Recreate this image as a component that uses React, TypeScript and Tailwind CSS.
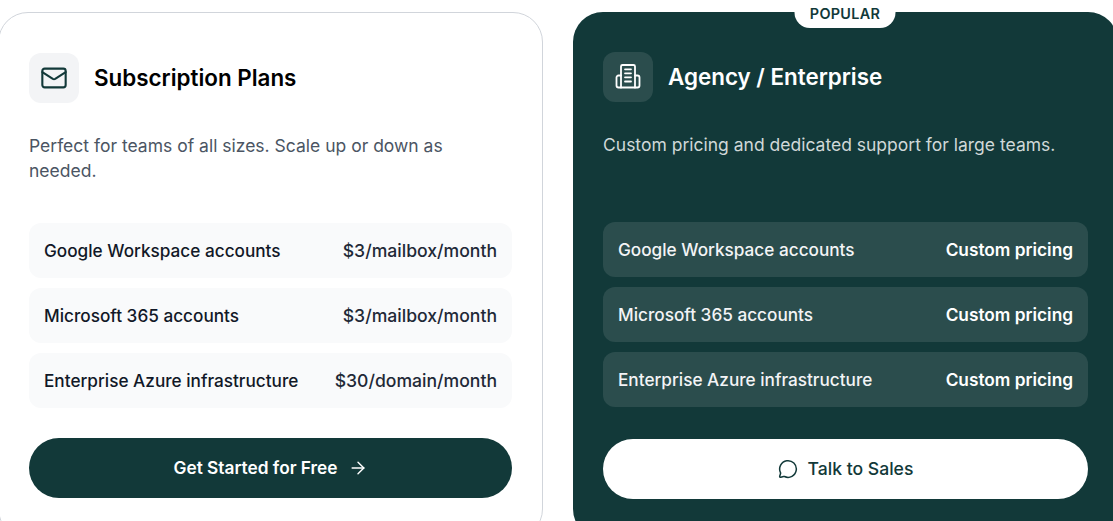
import { ArrowRight, Mail, MessageCircle } from 'lucide-react'

const font = { fontFamily: 'Inter, "Liberation Sans", sans-serif' }

const plans = [
  { name: 'Google Workspace accounts', price: '$3/mailbox/month' },
  { name: 'Microsoft 365 accounts', price: '$3/mailbox/month' },
  { name: 'Enterprise Azure infrastructure', price: '$30/domain/month' },
]

function AgencyIcon() {
  return (
    <svg width="28" height="28" viewBox="0 0 28 28" fill="none" stroke="currentColor" strokeWidth="1.8" strokeLinecap="round" strokeLinejoin="round">
      <path d="M7 24.5V3.5A1.5 1.5 0 0 1 8.5 2h11A1.5 1.5 0 0 1 21 3.5v21" />
      <path d="M7 12.5H4.5a2 2 0 0 0-2 2v8a2 2 0 0 0 2 2h19a2 2 0 0 0 2-2v-8a2 2 0 0 0-2-2H21" />
      <path d="M11 6.3h6M11 10.3h6M11 14.3h6M11 18.5h6" />
    </svg>
  )
}

export default function App() {
  return (
    <div className="h-[521px] w-[1113px] overflow-hidden bg-white" style={font}>
      <div className="ml-[-2px] grid w-[1120px] grid-cols-2 gap-[30px] pt-3">
        <div className="rounded-[30px] border border-[#d1d5db] bg-white px-[30px] py-10">
          <div className="flex items-center gap-[15px]">
            <div className="flex h-[50px] w-[50px] items-center justify-center rounded-xl bg-[#f3f4f6] text-[#123939]">
              <Mail size={28} strokeWidth={1.8} />
            </div>
            <h3 className="text-[22.4px] font-semibold text-black">Subscription Plans</h3>
          </div>
          <p className="mt-[30px] h-[50px] text-[17.5px] leading-[25px] text-[#4b5563]">
            Perfect for teams of all sizes. Scale up or down as needed.
          </p>
          <div className="mt-10 flex flex-col gap-2.5">
            {plans.map((p) => (
              <div key={p.name} className="flex h-[55px] items-center justify-between rounded-xl bg-[#f9fafb] px-[15px] leading-[26px]">
                <span className="text-[17.2px] font-medium text-[#111827]">{p.name}</span>
                <span className="text-[17.6px] font-medium text-[#1f2937]">{p.price}</span>
              </div>
            ))}
          </div>
          <button className="mt-[30px] flex h-[60px] w-full items-center justify-center gap-2.5 rounded-full bg-[#123939] text-[17.28px] font-semibold text-white">
            Get Started for Free
            <ArrowRight size={20} strokeWidth={1.7} />
          </button>
        </div>

        <div className="relative rounded-[30px] bg-[#123939] px-[30px] py-10">
          <div className="absolute left-[272px] top-[-15px] flex h-[31px] w-[101px] -translate-x-1/2 items-center justify-center rounded-full bg-white pt-[2px] text-[14.4px] font-semibold tracking-[0.3px] text-[#123939]">
            POPULAR
          </div>
          <div className="flex items-center gap-[15px]">
            <div className="flex h-[50px] w-[50px] items-center justify-center rounded-xl bg-[#2b4d4d] text-white">
              <AgencyIcon />
            </div>
            <h3 className="text-[22.4px] font-semibold text-white">Agency / Enterprise</h3>
          </div>
          <p className="mt-[30px] h-[50px] text-[17.5px] leading-[25px] text-[#d0d8d8]">
            Custom pricing and dedicated support for large teams.
          </p>
          <div className="mt-10 flex flex-col gap-2.5">
            {plans.map((p) => (
              <div key={p.name} className="flex h-[55px] items-center justify-between rounded-xl bg-[#2b4d4d] px-[15px] leading-[26px]">
                <span className="text-[17.2px] font-medium text-[#f3f4f6]">{p.name}</span>
                <span className="text-[17.28px] font-semibold text-white">Custom pricing</span>
              </div>
            ))}
          </div>
          <button className="mt-8 flex h-[60px] w-full items-center justify-center gap-2.5 rounded-full bg-white text-[17.6px] font-medium text-[#123939]">
            <MessageCircle size={20} strokeWidth={1.8} />
            Talk to Sales
          </button>
        </div>
      </div>
    </div>
  )
}
